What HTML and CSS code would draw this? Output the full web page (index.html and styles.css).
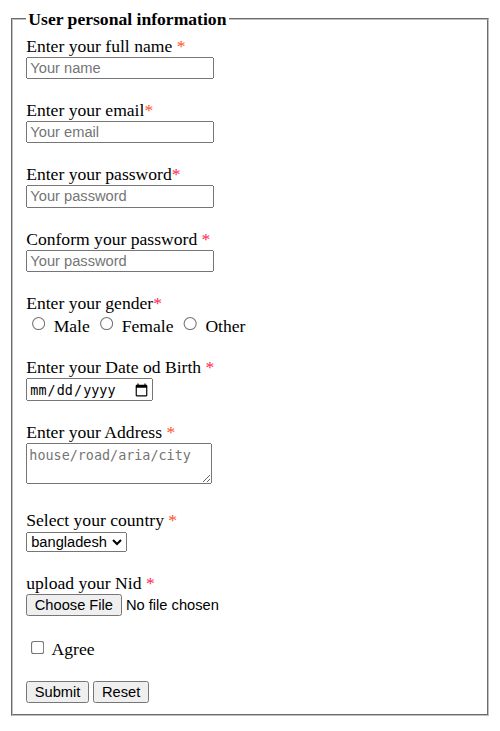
FILE: index.html
```
<!DOCTYPE html>
<html lang="en">
<head>
<meta charset="utf-8">
<title>User form</title>
<link rel="stylesheet" href="styles.css">
</head>
<body>
<form>
<fieldset>
<legend><b>User personal information</b></legend>
<label>Enter your full name <span class="tomato">*</span></label><br>
<input class="field" type="text" placeholder="Your name"><br><br>
<label>Enter your email<span class="tomato">*</span></label><br>
<input class="field" type="email" placeholder="Your email"><br><br>
<label>Enter your password<span class="rose">*</span></label><br>
<input class="field" type="password" placeholder="Your password"><br><br>
<label>Conform your password <span class="rose">*</span></label><br>
<input class="field" type="password" placeholder="Your password"><br><br>
<label>Enter your gender<span class="rose">*</span></label><br>
<input type="radio" name="gender"> Male
<input type="radio" name="gender"> Female
<input type="radio" name="gender"> Other<br><br>
<label>Enter your Date od Birth <span class="rose">*</span></label><br>
<input class="date" type="date"><br><br>
<label>Enter your Address <span class="tomato">*</span></label><br>
<textarea class="address" placeholder="house/road/aria/city"></textarea><br><br>
<label>Select your country <span class="tomato">*</span></label><br>
<select class="country"><option>bangladesh</option></select><br><br>
<label>upload your Nid <span class="rose">*</span></label><br>
<input type="file"><br><br>
<input type="checkbox"> Agree<br><br>
<input type="submit" value="Submit">
<input type="reset" value="Reset">
</fieldset>
</form>
</body>
</html>
```
FILE: styles.css
```
html { zoom: 1.1; }
body { font-family: "Liberation Serif", serif; }
fieldset { border-color: #c0c0c0; }
input, select { font-family: "Liberation Sans", sans-serif; }
.field { box-sizing: border-box; width: 171px; }
.date {
  box-sizing: border-box;
  width: 115.5px;
  height: 21px;
  font-family: "DejaVu Sans Mono", monospace;
  font-size: 12.2px;
}
.date::-webkit-datetime-edit { padding-top: 1px; padding-bottom: 0; }
.date::-webkit-calendar-picker-indicator { width: 13.33px; height: 13.33px; margin-left: 0; }
.address {
  box-sizing: border-box;
  width: 169px;
  height: 37px;
  padding-top: 3px;
  font-family: "DejaVu Sans Mono", monospace;
  font-size: 12.2px;
  line-height: 15px;
}
.country { width: 92px; }
.tomato { color: #ff4f1f; }
.rose { color: #ff2450; }
```
